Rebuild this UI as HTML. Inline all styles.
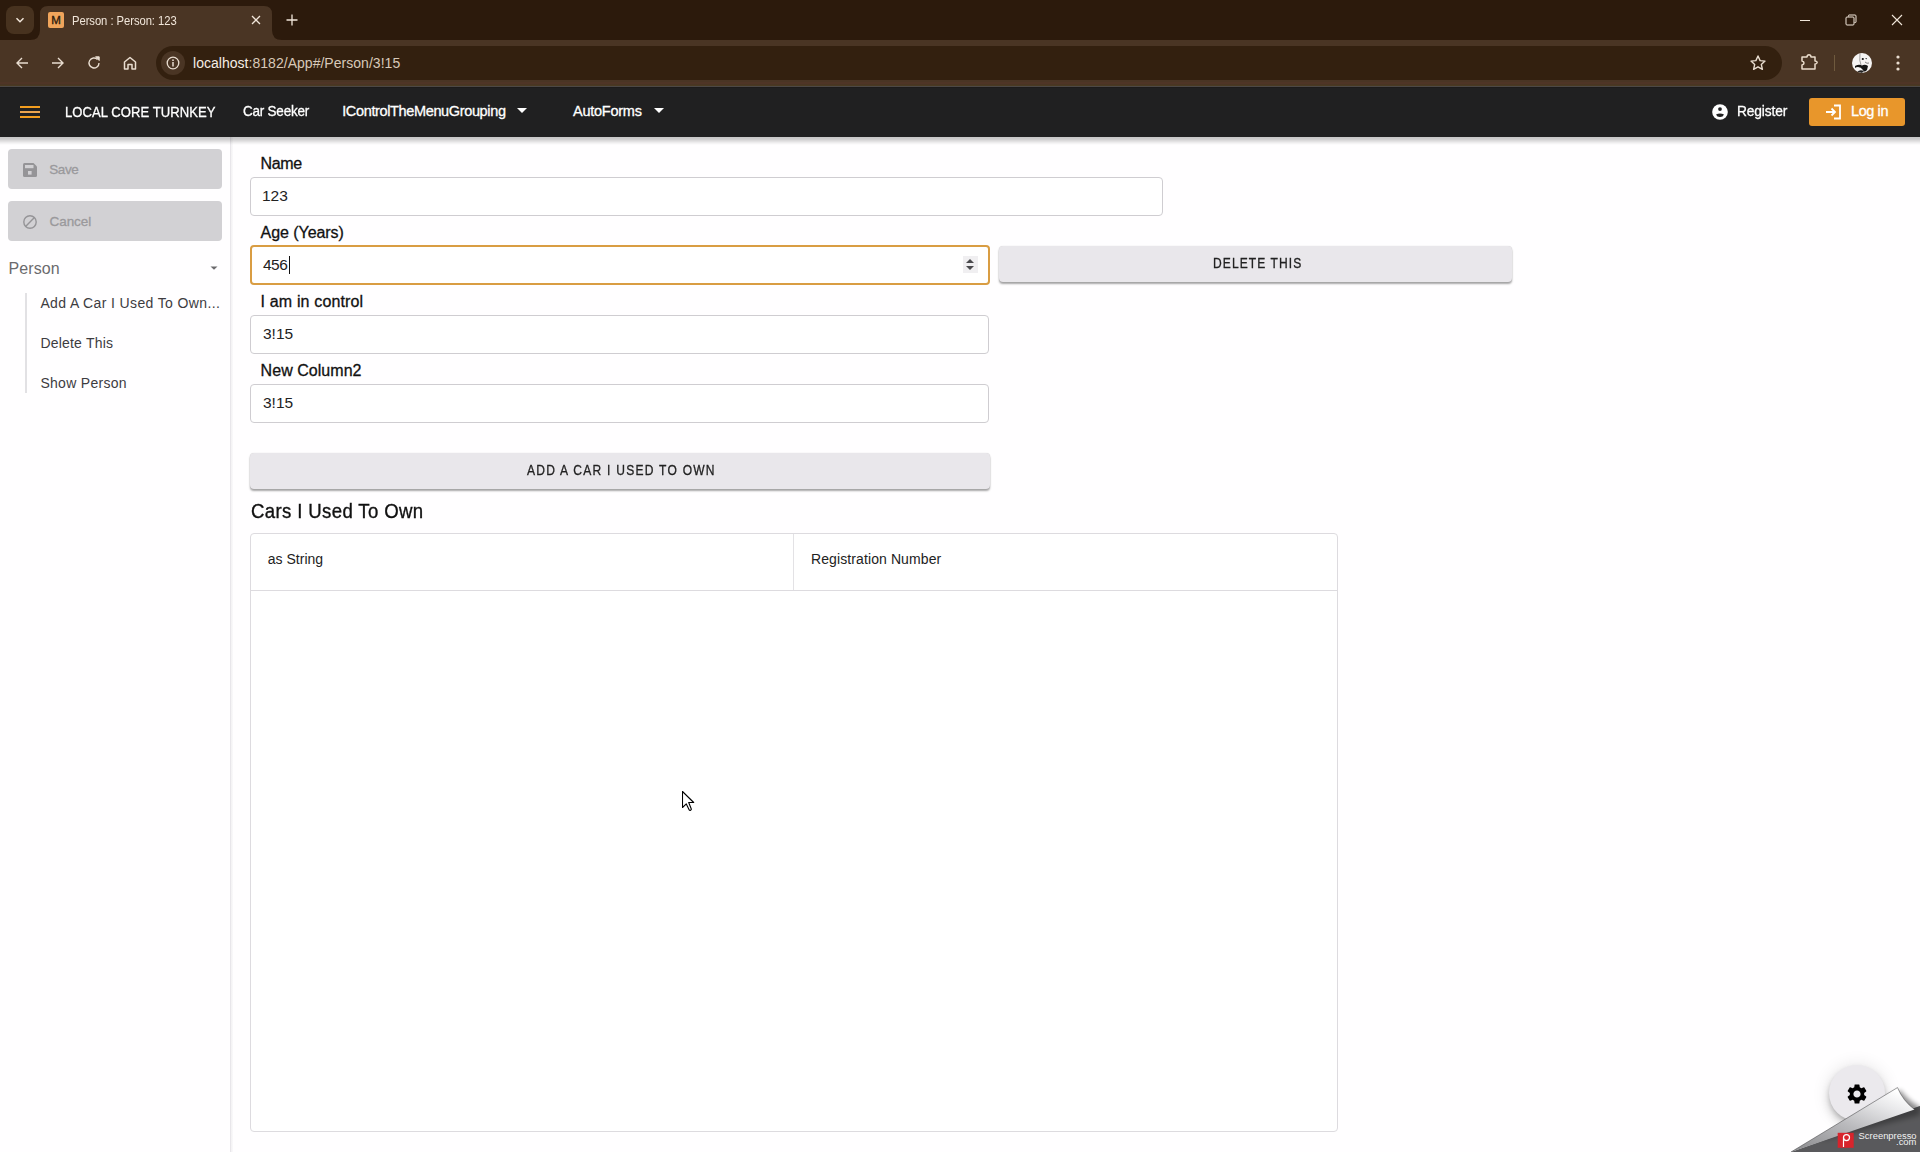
<!DOCTYPE html>
<html><head><meta charset="utf-8">
<style>
*{box-sizing:border-box;margin:0;padding:0}
html,body{width:1920px;height:1152px;overflow:hidden;background:#fffeff;font-family:"Liberation Sans",sans-serif}
.a{position:absolute}
#tabstrip{left:0;top:0;width:1920px;height:40px;background:#2c1a0c}
#toolbar{left:0;top:40px;width:1920px;height:46px;background:#4a3524}
#appbar{left:0;top:86px;width:1920px;height:51px;background:#202021}
.nav{color:#fff;font-size:15px;white-space:nowrap}
#sidebar{left:0;top:137px;width:231px;height:1015px;background:#fffeff;border-right:1px solid #e8e6ea}
#sidebar:after{content:"";position:absolute;left:231px;top:0;width:2px;height:1015px;background:linear-gradient(90deg,#f2f1f3,#fbfafb)}
.sbtn{left:8px;width:214px;height:40px;background:#d2d1d4;border-radius:4px}
.sbtn span{position:absolute;left:41px;top:12px;font-size:14px;color:#9c9b9e}
.lbl{left:260px;font-size:16px;color:#111;white-space:nowrap}
.inp{left:250px;height:39px;border:1px solid #cfcdd1;border-radius:4px;background:#fff}
.val{font-size:16px;color:#222;white-space:nowrap}
.bt{font-size:14px;color:#222;white-space:nowrap}
.btn{background:#e9e7eb;border-radius:4px;box-shadow:0 2px 2px rgba(0,0,0,.35),0 0 1px rgba(0,0,0,.2)}
.side-item{left:40px;font-size:14px;color:#3d3c3f;white-space:nowrap}
</style><style id="fit">
#tabtitle{left:72.0px !important;top:14.0px !important;font-size:12.5px !important;letter-spacing:-0.06px !important;line-height:normal !important;transform:scaleX(0.9) !important;transform-origin:0 0 !important;}
#url{left:193.0px !important;top:14.5px !important;font-size:14px !important;letter-spacing:0.03px !important;line-height:normal !important;}
#brand{left:65.0px !important;top:18.2px !important;font-size:14.5px !important;letter-spacing:0.07px !important;line-height:normal !important;-webkit-text-stroke:0.3px currentColor !important;transform:scaleX(0.9) !important;transform-origin:0 0 !important;}
#n1{left:243.0px !important;top:16.8px !important;font-size:14.5px !important;letter-spacing:-0.24px !important;line-height:normal !important;-webkit-text-stroke:0.3px currentColor !important;transform:scaleX(0.93) !important;transform-origin:0 0 !important;}
#n2{left:342.2px !important;top:16.8px !important;font-size:14.5px !important;letter-spacing:-0.36px !important;line-height:normal !important;-webkit-text-stroke:0.3px currentColor !important;}
#n3{left:573.0px !important;top:16.8px !important;font-size:14.5px !important;letter-spacing:-0.25px !important;line-height:normal !important;-webkit-text-stroke:0.3px currentColor !important;}
#reg{left:1737.0px !important;top:16.8px !important;font-size:14.5px !important;letter-spacing:-0.15px !important;line-height:normal !important;-webkit-text-stroke:0.3px currentColor !important;transform:scaleX(0.95) !important;transform-origin:0 0 !important;}
#login{left:1851.0px !important;top:16.8px !important;font-size:14.5px !important;letter-spacing:-0.40px !important;line-height:normal !important;-webkit-text-stroke:0.3px currentColor !important;}
#save{left:49.2px !important;top:25.4px !important;font-size:13.5px !important;letter-spacing:-0.40px !important;line-height:normal !important;-webkit-text-stroke:0.3px currentColor !important;}
#cancel{left:49.5px !important;top:77.0px !important;font-size:13.5px !important;letter-spacing:-0.06px !important;line-height:normal !important;-webkit-text-stroke:0.3px currentColor !important;}
#person{left:8.5px !important;top:123.4px !important;font-size:16px !important;letter-spacing:0.10px !important;line-height:normal !important;}
#si1{left:40.4px !important;top:158.2px !important;font-size:14px !important;letter-spacing:0.37px !important;line-height:normal !important;}
#si2{left:40.4px !important;top:197.9px !important;font-size:14px !important;letter-spacing:0.21px !important;line-height:normal !important;}
#si3{left:40.4px !important;top:238.3px !important;font-size:14px !important;letter-spacing:0.29px !important;line-height:normal !important;}
#l1{left:260.6px !important;top:154.5px !important;font-size:16px !important;letter-spacing:-0.37px !important;line-height:normal !important;-webkit-text-stroke:0.3px currentColor !important;}
#v1{left:262.0px !important;top:186.6px !important;font-size:15.5px !important;letter-spacing:0.00px !important;line-height:normal !important;}
#l2{left:260.6px !important;top:223.5px !important;font-size:16px !important;letter-spacing:-0.06px !important;line-height:normal !important;-webkit-text-stroke:0.3px currentColor !important;}
#v2{left:263.0px !important;top:255.8px !important;font-size:15.5px !important;letter-spacing:-0.50px !important;line-height:normal !important;}
#l3{left:260.6px !important;top:292.6px !important;font-size:16px !important;letter-spacing:0.15px !important;line-height:normal !important;-webkit-text-stroke:0.3px currentColor !important;}
#v3{left:263.0px !important;top:324.8px !important;font-size:15.5px !important;letter-spacing:0.00px !important;line-height:normal !important;}
#l4{left:260.6px !important;top:362.0px !important;font-size:16px !important;letter-spacing:0.04px !important;line-height:normal !important;-webkit-text-stroke:0.3px currentColor !important;}
#v4{left:263.0px !important;top:393.5px !important;font-size:15.5px !important;letter-spacing:0.00px !important;line-height:normal !important;}
#h2{left:251.0px !important;top:500.0px !important;font-size:19.8px !important;letter-spacing:0.38px !important;line-height:normal !important;-webkit-text-stroke:0.35px currentColor !important;transform:scaleX(0.94) !important;transform-origin:0 0 !important;}
#th1{left:267.8px !important;top:551.3px !important;font-size:14px !important;letter-spacing:0.01px !important;line-height:normal !important;}
#th2{left:811.0px !important;top:550.9px !important;font-size:14px !important;letter-spacing:0.10px !important;line-height:normal !important;}
#delbtn{left:1212.7px !important;top:255.0px !important;font-size:14px !important;letter-spacing:1.27px !important;line-height:normal !important;-webkit-text-stroke:0.3px currentColor !important;transform:scaleX(0.86) !important;transform-origin:0 0 !important;}
#addbtn{left:527.0px !important;top:462.2px !important;font-size:14px !important;letter-spacing:1.45px !important;line-height:normal !important;-webkit-text-stroke:0.3px currentColor !important;transform:scaleX(0.86) !important;transform-origin:0 0 !important;}
</style></head><body>

<div id="tabstrip" class="a">
  <div class="a" style="left:6px;top:6px;width:28px;height:28px;border-radius:8px;background:#47321f"></div>
  <svg class="a" style="left:14px;top:14px" width="12" height="12" viewBox="0 0 12 12"><path d="M2.5 4.2 L6 7.7 L9.5 4.2" stroke="#f1e6da" stroke-width="1.5" fill="none"/></svg>
  <svg class="a" style="left:30px;top:6px" width="252" height="34" viewBox="0 0 252 34"><path d="M0 34 Q10 34 10 24 L10 8 Q10 0 18 0 L234 0 Q242 0 242 8 L242 24 Q242 34 252 34 Z" fill="#4a3524"/></svg>
  <div class="a" style="left:48px;top:12px;width:16px;height:16px;border-radius:2px;background:#f0a55c"></div>
  <div class="a" style="left:48px;top:12px;width:16px;height:16px;font-size:11.5px;line-height:16px;text-align:center;color:#2c1a0c;-webkit-text-stroke:0.35px #2c1a0c">M</div>
  <div class="a" id="tabtitle" style="left:72px;top:12px;font-size:12.5px;line-height:16px;color:#f1e6da;white-space:nowrap">Person : Person: 123</div>
  <svg class="a" style="left:251px;top:15px" width="10" height="10" viewBox="0 0 10 10"><path d="M1 1 L9 9 M9 1 L1 9" stroke="#f1e6da" stroke-width="1.3"/></svg>
  <svg class="a" style="left:286px;top:14px" width="12" height="12" viewBox="0 0 12 12"><path d="M6 0.5 V11.5 M0.5 6 H11.5" stroke="#f1e6da" stroke-width="1.3"/></svg>
  <svg class="a" style="left:1799px;top:14px" width="12" height="12" viewBox="0 0 12 12"><path d="M1 6.5 H11" stroke="#f1e6da" stroke-width="1"/></svg>
  <svg class="a" style="left:1845px;top:14px" width="12" height="12" viewBox="0 0 12 12"><path d="M3.5 2.5 V1.5 Q3.5 1 4 1 H10 Q11 1 11 2 V8 Q11 8.5 10.5 8.5 H9.5" stroke="#f1e6da" stroke-width="1" fill="none"/><rect x="1" y="3" width="8" height="8" rx="1" stroke="#f1e6da" stroke-width="1" fill="none"/></svg>
  <svg class="a" style="left:1891px;top:14px" width="12" height="12" viewBox="0 0 12 12"><path d="M1 1 L11 11 M11 1 L1 11" stroke="#f1e6da" stroke-width="1.1"/></svg>
</div>
<div id="toolbar" class="a">
  <div class="a" style="left:0;top:42px;width:1920px;height:2px;background:#4f3526"></div>
  <div class="a" style="left:0;top:45px;width:1920px;height:1px;background:#4a3a22"></div>
  <svg class="a" style="left:14px;top:15px" width="16" height="16" viewBox="0 0 16 16"><path d="M14 8 H3 M8 3 L3 8 L8 13" stroke="#e9ddd0" stroke-width="1.4" fill="none"/></svg>
  <svg class="a" style="left:50px;top:15px" width="16" height="16" viewBox="0 0 16 16"><path d="M2 8 H13 M8 3 L13 8 L8 13" stroke="#e9ddd0" stroke-width="1.4" fill="none"/></svg>
  <svg class="a" style="left:86px;top:15px" width="16" height="16" viewBox="0 0 16 16"><path d="M13 8 A5 5 0 1 1 11.5 4.4" stroke="#e9ddd0" stroke-width="1.4" fill="none"/><path d="M9.5 1.8 H13.2 V5.5 Z" fill="#e9ddd0" stroke="#e9ddd0" stroke-width="1"/></svg>
  <svg class="a" style="left:122px;top:15px" width="16" height="16" viewBox="0 0 16 16"><path d="M2.5 7 L8 2.5 L13.5 7 V14 H10 V9.5 H6 V14 H2.5 Z" stroke="#e9ddd0" stroke-width="1.5" fill="none" stroke-linejoin="round"/></svg>
  <div class="a" style="left:156px;top:6px;width:1626px;height:34px;border-radius:17px;background:#33200f"></div>
  <div class="a" style="left:161px;top:11px;width:24px;height:24px;border-radius:12px;background:#4a3524"></div>
  <svg class="a" style="left:166px;top:16px" width="14" height="14" viewBox="0 0 14 14"><circle cx="7" cy="7" r="5.8" stroke="#e9ddd0" stroke-width="1.3" fill="none"/><path d="M7 6 V10.5" stroke="#e9ddd0" stroke-width="1.5"/><circle cx="7" cy="4.2" r="0.9" fill="#e9ddd0"/></svg>
  <div class="a" id="url" style="left:193px;top:14px;font-size:14.5px;line-height:18px;color:#d8c9b9;white-space:nowrap"><span style="color:#f6eee6">localhost</span>:8182/App#/Person/3!15</div>
  <svg class="a" style="left:1749px;top:14px" width="18" height="18" viewBox="0 0 18 18"><path d="M9 2 L11.1 6.6 L16 7.1 L12.3 10.4 L13.4 15.3 L9 12.8 L4.6 15.3 L5.7 10.4 L2 7.1 L6.9 6.6 Z" stroke="#e9ddd0" stroke-width="1.4" fill="none" stroke-linejoin="round"/></svg>
  <svg class="a" style="left:1799px;top:12px" width="20" height="20" viewBox="0 0 20 20"><path d="M3 5 H8 Q8.2 2.8 10 2.8 Q11.8 2.8 12 5 H16 V9 Q18.2 9.2 18.2 10.5 Q18 12 16 12 V17 H3 V13 Q5 12.6 5 11 Q5 9.4 3 9 Z" stroke="#eadccb" stroke-width="1.5" fill="none" stroke-linejoin="round"/></svg>
  <div class="a" style="left:1834px;top:15px;width:1px;height:16px;background:#6f5a3e"></div>
  <svg class="a" style="left:1852px;top:13px" width="20" height="20" viewBox="0 0 20 20"><defs><clipPath id="av"><circle cx="10" cy="10" r="10"/></clipPath></defs><g clip-path="url(#av)"><rect width="20" height="20" fill="#f6f4f3"/><path d="M8 1 Q7 8 9 12" stroke="#888" stroke-width="0.8" fill="none"/><ellipse cx="10.8" cy="6" rx="1.1" ry="0.9" fill="#111"/><ellipse cx="14.2" cy="5.6" rx="0.8" ry="0.7" fill="#333"/><path d="M3 13 Q7 11 10 12.5 Q13 11 16 13 L15 17 Q12 20 11 17 Q9 14 6 14 Q4 14 3 15Z" fill="#151515"/><path d="M5 19 Q8 16 12 18 L10 20 Z" fill="#222"/><path d="M13 9 Q15 11 17 10" stroke="#666" stroke-width="0.8" fill="none"/></g></svg>
  <svg class="a" style="left:1894px;top:14px" width="8" height="18" viewBox="0 0 8 18"><circle cx="4" cy="3" r="1.6" fill="#e9ddd0"/><circle cx="4" cy="9" r="1.6" fill="#e9ddd0"/><circle cx="4" cy="15" r="1.6" fill="#e9ddd0"/></svg>
</div>
<div id="appbar" class="a">
  <div class="a" style="left:0;top:0;width:1920px;height:1px;background:#4d4845"></div>
  <div class="a" style="left:0;top:1px;width:1920px;height:1px;background:#1d1b1b"></div>
  <div class="a" style="left:20px;top:20px;width:20px;height:2px;background:#f29d1f"></div>
  <div class="a" style="left:20px;top:25px;width:20px;height:2px;background:#eaa450"></div>
  <div class="a" style="left:20px;top:30px;width:20px;height:2px;background:#f29d1f"></div>
  <div class="a nav" id="brand" style="left:65px;top:17px;font-size:14.5px">LOCAL CORE TURNKEY</div>
  <div class="a nav" id="n1" style="left:243px;top:17px;font-size:14.5px">Car Seeker</div>
  <div class="a nav" id="n2" style="left:342px;top:17px;font-size:14.5px">IControlTheMenuGrouping</div>
  <svg class="a" style="left:517px;top:22px" width="10" height="6" viewBox="0 0 10 6"><path d="M0 0 H10 L5 5 Z" fill="#fff"/></svg>
  <div class="a nav" id="n3" style="left:573px;top:17px;font-size:14.5px">AutoForms</div>
  <svg class="a" style="left:654px;top:22px" width="10" height="6" viewBox="0 0 10 6"><path d="M0 0 H10 L5 5 Z" fill="#fff"/></svg>
  <svg class="a" style="left:1712px;top:18px" width="16" height="16" viewBox="0 0 16 16"><circle cx="8" cy="8" r="7.8" fill="#fff"/><ellipse cx="8" cy="5.1" rx="1.9" ry="1.9" fill="#202021"/><path d="M4 10.4 Q8 8.4 12 10.4 Q11 13 8 12.9 Q5 13 4 10.4Z" fill="#202021"/></svg>
  <div class="a nav" id="reg" style="left:1737px;top:17px;font-size:14.5px">Register</div>
  <div class="a" style="left:1809px;top:12px;width:96px;height:28px;border-radius:3px;background:#e8962b"></div>
  <svg class="a" style="left:1825px;top:18px" width="17" height="16" viewBox="0 0 17 16"><path d="M9 1.5 H15 V14.5 H9" stroke="#fff" stroke-width="1.8" fill="none"/><path d="M1 8 H10 M6.5 4.5 L10 8 L6.5 11.5" stroke="#fff" stroke-width="1.8" fill="none"/></svg>
  <div class="a nav" id="login" style="left:1851px;top:17px;font-size:14.5px">Log in</div>
</div>


<div id="sidebar" class="a">
  <div class="a sbtn" style="top:12px"></div>
  <svg class="a" style="left:23px;top:26px" width="14" height="14" viewBox="0 0 14 14"><path d="M1.5 0 H10.5 L14 3.5 V12.5 Q14 14 12.5 14 H1.5 Q0 14 0 12.5 V1.5 Q0 0 1.5 0Z" fill="#959497"/><rect x="2" y="2" width="8.5" height="3.2" fill="#d2d1d4"/><rect x="5" y="8" width="3.6" height="3.6" fill="#d2d1d4"/></svg>
  <div class="a" id="save" style="left:49px;top:24px;font-size:14px;color:#9a999c;white-space:nowrap">Save</div>
  <div class="a sbtn" style="top:64px"></div>
  <svg class="a" style="left:23px;top:78px" width="14" height="14" viewBox="0 0 14 14"><circle cx="7" cy="7" r="6.2" stroke="#959497" stroke-width="1.4" fill="none"/><path d="M2.6 11.4 L11.4 2.6" stroke="#959497" stroke-width="1.4"/></svg>
  <div class="a" id="cancel" style="left:49px;top:76px;font-size:14px;color:#9a999c;white-space:nowrap">Cancel</div>
  <div class="a" id="person" style="left:8px;top:122px;font-size:16px;color:#6b6a6d;white-space:nowrap">Person</div>
  <svg class="a" style="left:210px;top:129px" width="8" height="4" viewBox="0 0 8 4"><path d="M0.5 0.5 H7.5 L4 3.8Z" fill="#6b6a6d"/></svg>
  <div class="a" style="left:25px;top:156px;width:2px;height:100px;background:#e2e1e4"></div>
  <div class="a side-item" id="si1" style="top:157px">Add A Car I Used To Own...</div>
  <div class="a side-item" id="si2" style="top:197px">Delete This</div>
  <div class="a side-item" id="si3" style="top:237px">Show Person</div>
</div>
<div class="a lbl" id="l1" style="top:155px">Name</div>
<div class="a inp" style="top:177px;width:913px"></div>
<div class="a val" id="v1">123</div>
<div class="a lbl" id="l2" style="top:224px">Age (Years)</div>
<div class="a inp" style="top:245px;width:739.5px;height:40px;border:2px solid #d99d43"></div>
<div class="a val" id="v2">456</div>
<div class="a" style="left:289px;top:256px;width:1px;height:18px;background:#111"></div>
<div class="a" style="left:963px;top:256px;width:15px;height:17px;background:#f0eff1"></div>
<svg class="a" style="left:965px;top:258px" width="10" height="13" viewBox="0 0 10 13"><path d="M1 5 L5 1 L9 5Z M1 8 L5 12 L9 8Z" fill="#4a4a4d"/></svg>
<div class="a btn" style="left:999px;top:246px;width:513px;height:36px"></div>
<div class="a bt" id="delbtn">DELETE THIS</div>
<div class="a lbl" id="l3" style="top:293px">I am in control</div>
<div class="a inp" style="top:315px;width:739px"></div>
<div class="a val" id="v3">3!15</div>
<div class="a lbl" id="l4" style="top:362px">New Column2</div>
<div class="a inp" style="top:384px;width:739px"></div>
<div class="a val" id="v4">3!15</div>
<div class="a btn" style="left:250px;top:453px;width:740px;height:36px"></div>
<div class="a bt" id="addbtn">ADD A CAR I USED TO OWN</div>
<div class="a" id="h2" style="left:250px;top:501px;font-size:19px;color:#111;white-space:nowrap">Cars I Used To Own</div>
<div class="a" style="left:250px;top:533px;width:1088px;height:599px;border:1px solid #dddbdf;border-radius:4px;background:#fff"></div>
<div class="a" style="left:251px;top:590px;width:1086px;height:1px;background:#dddbdf"></div>
<div class="a" style="left:793px;top:534px;width:1px;height:56px;background:#e3e2e5"></div>
<div class="a" id="th1" style="left:267px;top:551px;font-size:14px;color:#222;white-space:nowrap">as String</div>
<div class="a" id="th2" style="left:811px;top:551px;font-size:14px;color:#222;white-space:nowrap">Registration Number</div>

<div class="a" style="left:0;top:137px;width:1920px;height:8px;background:linear-gradient(rgba(0,0,0,.22) 0px,rgba(0,0,0,.2) 2px,rgba(0,0,0,.13) 4px,rgba(0,0,0,.05) 6px,rgba(0,0,0,0) 8px)"></div>

<div class="a" style="left:1829px;top:1065px;width:56px;height:56px;border-radius:28px;background:#ebe9ed;box-shadow:0 3px 5px -1px rgba(0,0,0,.2),0 6px 10px 0 rgba(0,0,0,.14),0 1px 18px 0 rgba(0,0,0,.12)"></div>
<svg class="a" style="left:1845px;top:1082px" width="24" height="24" viewBox="0 0 24 24"><path fill="#000" d="M19.14 12.94c.04-.3.06-.61.06-.94 0-.32-.02-.64-.07-.94l2.03-1.58a.49.49 0 0 0 .12-.61l-1.92-3.32a.488.488 0 0 0-.59-.22l-2.39.96c-.5-.38-1.03-.7-1.62-.94l-.36-2.54a.484.484 0 0 0-.48-.41h-3.84c-.24 0-.43.17-.47.41l-.36 2.54c-.59.24-1.13.57-1.62.94l-2.39-.96c-.22-.08-.47 0-.59.22L2.74 8.87c-.12.21-.08.47.12.61l2.03 1.58c-.05.3-.09.63-.09.94s.02.64.07.94l-2.03 1.58a.49.49 0 0 0-.12.61l1.92 3.32c.12.22.37.29.59.22l2.39-.96c.5.38 1.03.7 1.62.94l.36 2.54c.05.24.24.41.48.41h3.84c.24 0 .44-.17.47-.41l.36-2.54c.59-.24 1.13-.56 1.62-.94l2.39.96c.22.08.47 0 .59-.22l1.92-3.32c.12-.22.07-.47-.12-.61l-2.01-1.58zM12 15.6c-1.98 0-3.6-1.62-3.6-3.6s1.62-3.6 3.6-3.6 3.6 1.62 3.6 3.6-1.62 3.6-3.6 3.6z"/></svg>
<svg class="a" style="left:1790px;top:1085px" width="130" height="67" viewBox="0 0 130 67">
  <defs>
    <linearGradient id="curl" x1="0.1" y1="1" x2="0.85" y2="0.05"><stop offset="0" stop-color="#8e8e91"/><stop offset="0.45" stop-color="#b9b9bc"/><stop offset="0.8" stop-color="#e8e8ea"/><stop offset="1" stop-color="#ffffff"/></linearGradient>
    <filter id="blr" x="-20%" y="-20%" width="140%" height="140%"><feGaussianBlur stdDeviation="2.5"/></filter>
  </defs>
  <path d="M1 67 L130 21 L130 67 Z" fill="#5a5a5c"/>
  <path d="M30 56 L110 5 Q118 16 130 22 L130 30 Z" fill="#000" opacity="0.45" filter="url(#blr)"/>
  <path d="M1 67 L130 21 L130 67 Z" fill="#5a5a5c" opacity="0.35"/>
  <path d="M1 67 L107.5 2.6 Q113 16 124.5 24.5 Z" fill="url(#curl)"/>
  <path d="M1 67 L107.5 2.6 Q113 16 124.5 24.5" stroke="#3a3a3c" stroke-width="0.5" fill="none"/>
  <rect x="47.7" y="47.8" width="16" height="15" fill="#d8242c"/>
  <circle cx="56.5" cy="52.6" r="3" fill="none" stroke="#fff" stroke-width="1.2"/>
  <path d="M53.5 52.6 V62" stroke="#fff" stroke-width="1.2"/>
  <text x="68.6" y="53.6" font-family="Liberation Sans" font-size="8.3" fill="#f2f2f2" textLength="58" lengthAdjust="spacingAndGlyphs">Screenpresso</text>
  <text x="106" y="60.4" font-family="Liberation Sans" font-size="8.3" fill="#f2f2f2" textLength="20.5" lengthAdjust="spacingAndGlyphs">.com</text>
</svg>
<svg class="a" style="left:682px;top:790px" width="14" height="22" viewBox="0 0 14 22"><path d="M0.5 1.5 V17.5 L4.3 13.9 L7 19.6 Q7.6 20.6 8.6 20.2 Q9.6 19.7 9.2 18.7 L6.7 12.5 H11.7 Z" fill="#fff" stroke="#000" stroke-width="1.1" stroke-linejoin="round"/></svg>
</body></html>
